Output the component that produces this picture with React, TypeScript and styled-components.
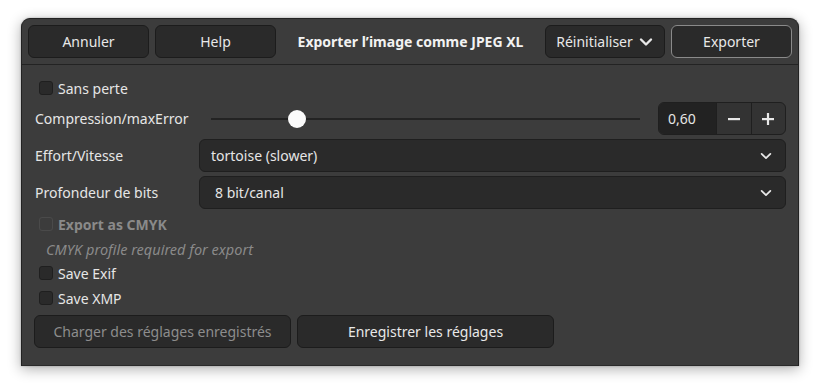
import { createGlobalStyle, styled } from 'styled-components';

const GlobalStyle = createGlobalStyle`
  html, body {
    margin: 0;
    padding: 0;
    background: #ffffff;
  }
  body {
    font-family: 'Noto Sans', 'DejaVu Sans', sans-serif;
    font-size: 14px;
    color: #e6e6e6;
  }
`;

const Page = styled.div`
  width: 820px;
  height: 390px;
  padding: 18px 0 0 21px;
  box-sizing: border-box;
`;

const Window = styled.div`
  width: 778px;
  height: 348px;
  box-sizing: border-box;
  background: #3c3c3c;
  border: 1px solid #222;
  border-bottom-color: #2a2a2a;
  border-radius: 9px 9px 0 0;
  box-shadow: 0 3px 14px rgba(0, 0, 0, 0.32), 0 0 2px rgba(0, 0, 0, 0.3);
  display: flex;
  flex-direction: column;
`;

const Header = styled.header`
  display: flex;
  align-items: center;
  gap: 6px;
  height: 45px;
  padding: 0 6px;
  border-bottom: 1px solid #232323;
`;

const Button = styled.button<{ $w: number; $accent?: boolean; $disabled?: boolean }>`
  width: ${({ $w }) => $w}px;
  height: 33px;
  box-sizing: border-box;
  display: flex;
  align-items: center;
  justify-content: center;
  gap: 5px;
  padding: 0;
  font-family: inherit;
  font-size: 14px;
  color: ${({ $disabled }) => ($disabled ? '#8d8d8d' : '#e8e8e8')};
  background: #2a2a2a;
  border: 1px solid ${({ $accent }) => ($accent ? '#8a8a8a' : '#1c1c1c')};
  border-radius: 6px;
`;

const Title = styled.div`
  flex: 1;
  text-align: center;
  font-weight: 700;
  font-size: 14px;
  color: #f2f2f2;
`;

const Body = styled.div`
  display: flex;
  flex-direction: column;
  padding: 12px 12px 0 13px;
`;

const CheckRow = styled.label<{ $top?: number; $disabled?: boolean; $bold?: boolean }>`
  display: flex;
  align-items: center;
  gap: 5px;
  height: 22px;
  margin-top: ${({ $top }) => $top ?? 0}px;
  padding-left: 4px;
  color: ${({ $disabled }) => ($disabled ? '#8a8a8a' : '#e6e6e6')};
  font-weight: ${({ $bold }) => ($bold ? 700 : 400)};
`;

const Box = styled.span<{ $disabled?: boolean }>`
  width: 14px;
  height: 14px;
  box-sizing: border-box;
  border-radius: 3px;
  background: ${({ $disabled }) => ($disabled ? 'transparent' : '#2a2a2a')};
  border: 1px solid ${({ $disabled }) => ($disabled ? '#4a4a4a' : '#1f1f1f')};
`;

const Note = styled.div`
  height: 22px;
  margin-top: 3px;
  padding-left: 11px;
  display: flex;
  align-items: center;
  font-style: italic;
  font-size: 14.5px;
  color: #8a8a8a;
`;

const ScaleRow = styled.div`
  display: flex;
  align-items: center;
  height: 33px;
  margin-top: 3px;
`;

const Label = styled.span`
  width: 164px;
  flex-shrink: 0;
  white-space: nowrap;
`;

const Track = styled.div`
  position: relative;
  margin-left: 12px;
  width: 429px;
  height: 2px;
  background: #232323;
`;

const Knob = styled.span`
  position: absolute;
  top: -8px;
  width: 18px;
  height: 18px;
  margin-left: -9px;
  border-radius: 50%;
  background: #fbfbfb;
`;

const Spin = styled.div`
  margin-left: auto;
  display: flex;
  height: 33px;
  width: 128px;
  box-sizing: border-box;
  border: 1px solid #1f1f1f;
  border-radius: 6px;
  overflow: hidden;
  background: #333;
`;

const SpinEntry = styled.div`
  width: 57px;
  background: #222;
  display: flex;
  align-items: center;
  padding-left: 9px;
  box-sizing: border-box;
  font-size: 14px;
`;

const SpinButton = styled.div`
  flex: 1;
  display: flex;
  align-items: center;
  justify-content: center;
  border-left: 1px solid #1f1f1f;
`;

const FieldRow = styled.div`
  display: flex;
  align-items: center;
  height: 33px;
  margin-top: 4px;
`;

const Combo = styled.div<{ $pad: number }>`
  flex: 1;
  height: 33px;
  box-sizing: border-box;
  display: flex;
  align-items: center;
  justify-content: space-between;
  padding: 0 12px 0 ${({ $pad }) => $pad}px;
  background: #2a2a2a;
  border: 1px solid #1f1f1f;
  border-radius: 6px;
`;

const Footer = styled.div`
  display: flex;
  gap: 6px;
  margin-top: 6px;
  margin-left: -1px;
`;

const Chevron = ({ size, stroke }: { size: number; stroke: number }) => (
  <svg width={size} height={size} viewBox="0 0 16 16" fill="none">
    <path d="M3 5.5 L8 10.5 L13 5.5" stroke="#e8e8e8" strokeWidth={stroke} strokeLinecap="round" strokeLinejoin="round" />
  </svg>
);

const Minus = () => (
  <svg width="14" height="14" viewBox="0 0 14 14">
    <rect x="1" y="6" width="12" height="2.2" fill="#e8e8e8" />
  </svg>
);

const Plus = () => (
  <svg width="14" height="14" viewBox="0 0 14 14">
    <rect x="1" y="6" width="12" height="2.2" fill="#e8e8e8" />
    <rect x="5.9" y="1" width="2.2" height="12" fill="#e8e8e8" />
  </svg>
);

const sliderValue = 0.2;

const App = () => {
  return (
    <Page>
      <GlobalStyle />
      <Window>
        <Header>
          <Button $w={121}>Annuler</Button>
          <Button $w={121}>Help</Button>
          <Title>Exporter l’image comme JPEG XL</Title>
          <Button $w={120}>
            Réinitialiser
            <Chevron size={16} stroke={2.4} />
          </Button>
          <Button $w={121} $accent>
            Exporter
          </Button>
        </Header>

        <Body>
          <CheckRow>
            <Box />
            Sans perte
          </CheckRow>

          <ScaleRow>
            <Label>Compression/maxError</Label>
            <Track>
              <Knob style={{ left: `${sliderValue * 100}%` }} />
            </Track>
            <Spin>
              <SpinEntry>0,60</SpinEntry>
              <SpinButton>
                <Minus />
              </SpinButton>
              <SpinButton>
                <Plus />
              </SpinButton>
            </Spin>
          </ScaleRow>

          <FieldRow>
            <Label>Effort/Vitesse</Label>
            <Combo $pad={11}>
              tortoise (slower)
              <Chevron size={14} stroke={2} />
            </Combo>
          </FieldRow>

          <FieldRow>
            <Label>Profondeur de bits</Label>
            <Combo $pad={15}>
              8 bit/canal
              <Chevron size={14} stroke={2} />
            </Combo>
          </FieldRow>

          <CheckRow $top={4} $disabled $bold>
            <Box $disabled />
            Export as CMYK
          </CheckRow>

          <Note>CMYK profile required for export</Note>

          <CheckRow $top={2}>
            <Box />
            Save Exif
          </CheckRow>

          <CheckRow $top={3}>
            <Box />
            Save XMP
          </CheckRow>

          <Footer>
            <Button $w={257} $disabled>
              Charger des réglages enregistrés
            </Button>
            <Button $w={257}>Enregistrer les réglages</Button>
          </Footer>
        </Body>
      </Window>
    </Page>
  );
};

export default App;
